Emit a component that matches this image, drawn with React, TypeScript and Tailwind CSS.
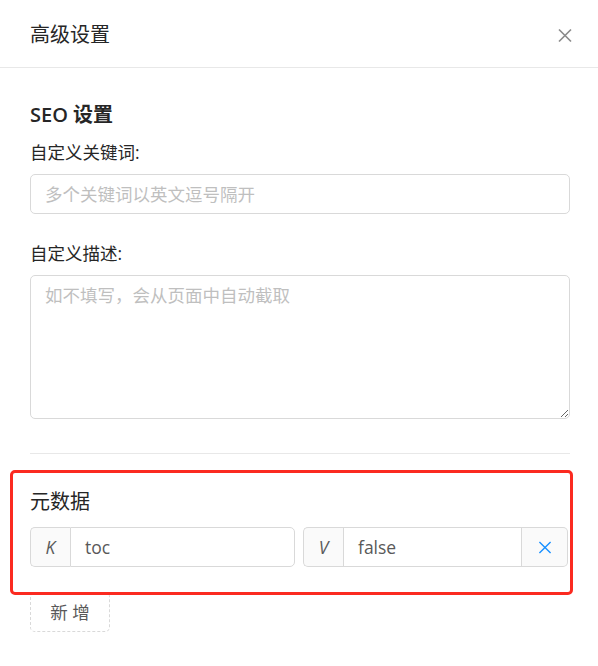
import React from "react";

const font = { fontFamily: '"Open Sans", "Noto Sans CJK SC", sans-serif' };

function CloseIcon({ className, w = 1.5 }: { className?: string; w?: number }) {
  return (
    <svg viewBox="0 0 14 14" className={className} fill="none" stroke="currentColor" strokeWidth={w} strokeLinecap="butt">
      <path d="M1 1 L13 13 M13 1 L1 13" />
    </svg>
  );
}

export default function App() {
  return (
    <div
      className="relative w-[598px] h-[666px] bg-white text-[#262626] overflow-hidden font-['Open_Sans','Noto_Sans_CJK_SC',sans-serif]"
      style={font}
    >
      {/* Header */}
      <div className="h-[68px] border-b border-[#e8e8e8] flex items-center justify-between pl-[30px] pr-[26px] pt-[3px]">
        <div className="text-[20px] leading-[28px] font-normal text-[#262626]">高级设置</div>
        <CloseIcon className="w-[14px] h-[15px] text-[#8c8c8c]" w={1.7} />
      </div>

      {/* Body */}
      <div className="pl-[30px] pr-[28px] pt-[33px]">
        <h3 className="text-[20px] leading-[28px] font-semibold text-[#262626]">SEO 设置</h3>

        <div className="mt-[10px] mb-[9px] text-[17.5px] leading-[26px] text-[#262626]">自定义关键词:</div>
        <input
          className="block w-full h-[40px] border border-[#d9d9d9] rounded-[5px] px-[14px] text-[17.5px] text-[#595959] placeholder:text-[#bfbfbf] outline-none"
          placeholder="多个关键词以英文逗号隔开"
        />

        <div className="mt-[26px] mb-[9px] text-[17.5px] leading-[26px] text-[#262626]">自定义描述:</div>
        <textarea
          className="block w-full h-[144px] border border-[#d9d9d9] rounded-[5px] px-[14px] pt-[6px] text-[17.5px] leading-[26px] text-[#595959] placeholder:text-[#bfbfbf] outline-none resize"
          placeholder="如不填写，会从页面中自动截取"
        />

        <div className="mt-[34px] h-px bg-[#e8e8e8]" />

        <div className="mt-[34px] text-[20px] leading-[28px] text-[#262626]">元数据</div>

        <div className="mt-[11px] flex gap-[8px]">
          <div className="w-[265px] h-[40px] flex">
            <div className="w-[40px] flex items-center justify-center bg-[#fafafa] border border-r-0 border-[#d9d9d9] rounded-l-[5px] italic text-[17.5px] text-[#595959]">
              K
            </div>
            <div className="flex-1 flex items-center border border-[#d9d9d9] rounded-r-[5px] pl-[14px] text-[17.5px] text-[#595959]">
              toc
            </div>
          </div>
          <div className="w-[265px] h-[40px] flex">
            <div className="w-[40px] flex items-center justify-center bg-[#fafafa] border border-r-0 border-[#d9d9d9] rounded-l-[5px] italic text-[17.5px] text-[#595959]">
              V
            </div>
            <div className="flex-1 flex items-center border border-[#d9d9d9] pl-[14px] text-[17.5px] text-[#595959]">
              false
            </div>
            <div className="w-[46px] flex items-center justify-center bg-[#fafafa] border border-l-0 border-[#d9d9d9] rounded-r-[5px]">
              <CloseIcon className="w-[14px] h-[13px] text-[#1890ff]" />
            </div>
          </div>
        </div>

        <button className="mt-[25px] w-[80px] h-[40px] border border-dashed border-[#d9d9d9] rounded-[5px] text-[17.5px] text-[#595959] bg-white">
          新 增
        </button>
      </div>

      {/* Red annotation overlay */}
      <div className="absolute left-[10px] top-[470px] w-[563px] h-[125px] border-[3px] border-[#fb2a20] rounded-[5px] pointer-events-none" />
    </div>
  );
}
